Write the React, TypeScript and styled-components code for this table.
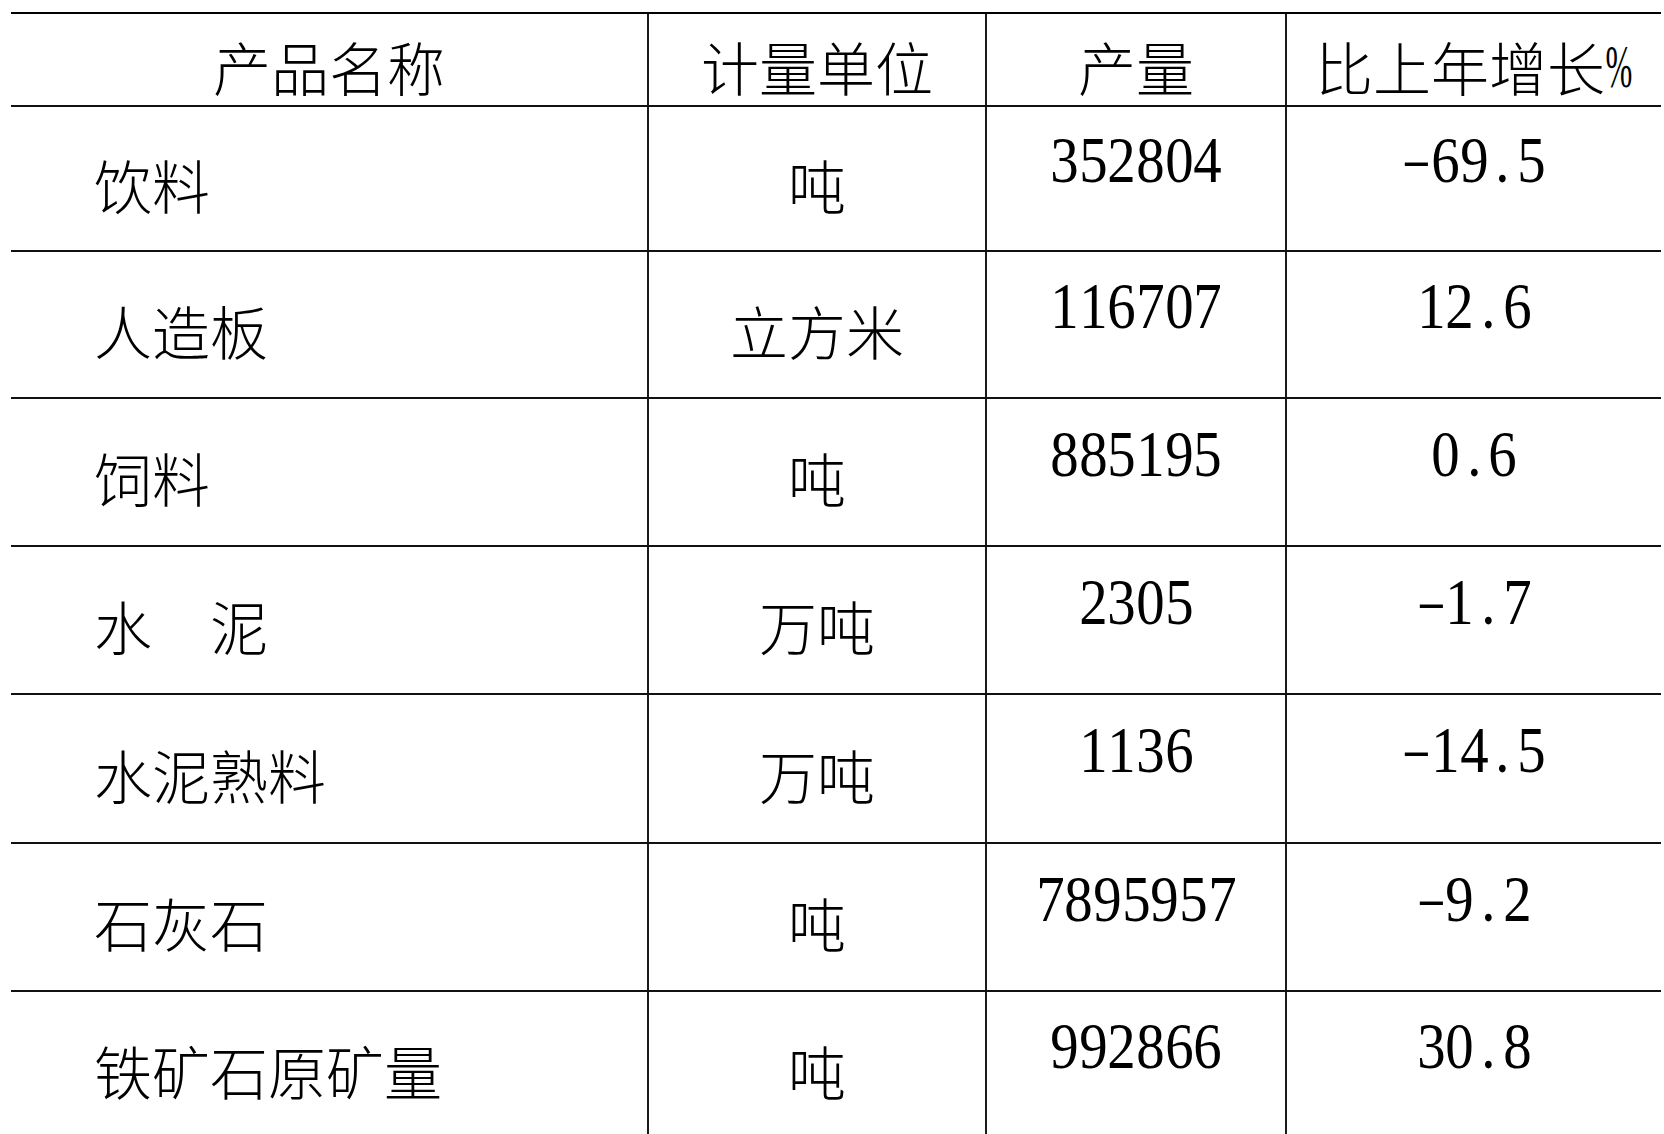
import React from 'react'
import styled, { createGlobalStyle } from 'styled-components'

const GlobalStyle = createGlobalStyle`
  html, body {
    margin: 0;
    padding: 0;
    background: #fff;
  }
`

const Page = styled.div`
  padding: 12px 3px 0 11px;
  height: 1134px;
  box-sizing: border-box;
  overflow: hidden;
`

const Table = styled.div`
  width: 1650px;
  border-top: 2px solid #000;
  display: flex;
  flex-direction: column;
`

const Row = styled.div<{ $h: number }>`
  display: grid;
  grid-template-columns: 638px 338px 300px 374px;
  height: ${(p) => p.$h}px;
  flex: none;
  box-sizing: border-box;
  border-bottom: 2px solid #111;
`

const Cell = styled.div`
  display: flex;
  align-items: center;
  box-sizing: border-box;
  border-right: 2px solid #1a1a1a;
  font-family: "Noto Sans CJK SC", sans-serif;
  font-weight: 300;
  font-size: 58px;
  line-height: 58px;
  color: #000;
  white-space: nowrap;

  &:last-child {
    border-right: none;
  }
`

const HeadCell = styled(Cell)`
  justify-content: center;
  padding-top: 13px;
`

const NameCell = styled(Cell)`
  padding-left: 83px;
  padding-top: 10px;
`

const UnitCell = styled(Cell)`
  justify-content: center;
  padding-top: 10px;
`

const NumCell = styled(Cell)`
  justify-content: center;
  padding-bottom: 37px;
`

const Digit = styled.span<{ $dash?: boolean }>`
  display: inline-flex;
  justify-content: center;
  width: 28.7px;
  font-family: "Liberation Serif", serif;
  font-size: 66px;
  line-height: 66px;
  transform: ${(p) => (p.$dash ? 'scale(1.35, 0.7)' : 'scaleX(0.86)')};
`

const Pct = styled.span`
  display: inline-flex;
  justify-content: center;
  width: 28px;
  font-family: "Liberation Serif", serif;
  font-size: 62px;
  line-height: 58px;
  transform: scaleX(0.52);
`

const Mono = ({ text }: { text: string }) => (
  <>
    {text.split('').map((ch, i) => (
      <Digit key={i} $dash={ch === '-'}>
        {ch}
      </Digit>
    ))}
  </>
)

const rows = [
  { name: '饮料', unit: '吨', amount: '352804', change: '-69.5', h: 145 },
  { name: '人造板', unit: '立方米', amount: '116707', change: '12.6', h: 147 },
  { name: '饲料', unit: '吨', amount: '885195', change: '0.6', h: 148 },
  { name: '水　泥', unit: '万吨', amount: '2305', change: '-1.7', h: 148 },
  { name: '水泥熟料', unit: '万吨', amount: '1136', change: '-14.5', h: 149 },
  { name: '石灰石', unit: '吨', amount: '7895957', change: '-9.2', h: 148 },
  { name: '铁矿石原矿量', unit: '吨', amount: '992866', change: '30.8', h: 147 },
]

export default function App() {
  return (
    <>
      <GlobalStyle />
      <Page>
        <Table>
          <Row $h={93}>
            <HeadCell>产品名称</HeadCell>
            <HeadCell>计量单位</HeadCell>
            <HeadCell>产量</HeadCell>
            <HeadCell>
              比上年增长<Pct>%</Pct>
            </HeadCell>
          </Row>
          {rows.map((r) => (
            <Row key={r.name} $h={r.h}>
              <NameCell>{r.name}</NameCell>
              <UnitCell>{r.unit}</UnitCell>
              <NumCell>
                <Mono text={r.amount} />
              </NumCell>
              <NumCell>
                <Mono text={r.change} />
              </NumCell>
            </Row>
          ))}
        </Table>
      </Page>
    </>
  )
}
